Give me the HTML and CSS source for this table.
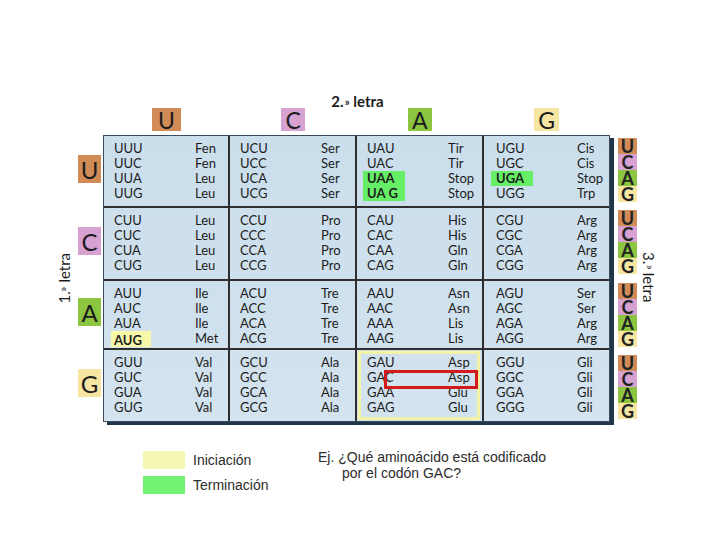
FILE: index.html
```html
<!DOCTYPE html>
<html lang="es">
<head>
<meta charset="utf-8">
<title>Código genético</title>
<link rel="stylesheet" href="styles.css">
</head>
<body>
<div class="page">
  <div class="chart">
    <div class="title">2.<span class="ord">»</span> letra</div>
    <div class="colheads">
      <span class="lt c-u">U</span>
      <span class="lt c-c">C</span>
      <span class="lt c-a">A</span>
      <span class="lt c-g">G</span>
    </div>

    <div class="lab1"><span>1.<span class="ord">»</span> letra</span></div>

    <div class="rh c-u r1">U</div>
    <div class="rh c-c r2">C</div>
    <div class="rh c-a r3">A</div>
    <div class="rh c-g r4">G</div>

    <div class="table">
      <div class="cell">
        <div class="ln"><span>UUU</span><span>Fen</span></div>
        <div class="ln"><span>UUC</span><span>Fen</span></div>
        <div class="ln"><span>UUA</span><span>Leu</span></div>
        <div class="ln"><span>UUG</span><span>Leu</span></div>
      </div>
      <div class="cell">
        <div class="ln"><span>UCU</span><span>Ser</span></div>
        <div class="ln"><span>UCC</span><span>Ser</span></div>
        <div class="ln"><span>UCA</span><span>Ser</span></div>
        <div class="ln"><span>UCG</span><span>Ser</span></div>
      </div>
      <div class="cell">
        <div class="ln"><span>UAU</span><span>Tir</span></div>
        <div class="ln"><span>UAC</span><span>Tir</span></div>
        <div class="ln"><span class="stop">UAA</span><span>Stop</span></div>
        <div class="ln"><span class="stop"><span class="gap">UA</span>G</span><span>Stop</span></div>
      </div>
      <div class="cell last-col">
        <div class="ln"><span>UGU</span><span>Cis</span></div>
        <div class="ln"><span>UGC</span><span>Cis</span></div>
        <div class="ln"><span class="stop">UGA</span><span>Stop</span></div>
        <div class="ln"><span>UGG</span><span>Trp</span></div>
      </div>

      <div class="cell">
        <div class="ln"><span>CUU</span><span>Leu</span></div>
        <div class="ln"><span>CUC</span><span>Leu</span></div>
        <div class="ln"><span>CUA</span><span>Leu</span></div>
        <div class="ln"><span>CUG</span><span>Leu</span></div>
      </div>
      <div class="cell">
        <div class="ln"><span>CCU</span><span>Pro</span></div>
        <div class="ln"><span>CCC</span><span>Pro</span></div>
        <div class="ln"><span>CCA</span><span>Pro</span></div>
        <div class="ln"><span>CCG</span><span>Pro</span></div>
      </div>
      <div class="cell">
        <div class="ln"><span>CAU</span><span>His</span></div>
        <div class="ln"><span>CAC</span><span>His</span></div>
        <div class="ln"><span>CAA</span><span>Gln</span></div>
        <div class="ln"><span>CAG</span><span>Gln</span></div>
      </div>
      <div class="cell last-col">
        <div class="ln"><span>CGU</span><span>Arg</span></div>
        <div class="ln"><span>CGC</span><span>Arg</span></div>
        <div class="ln"><span>CGA</span><span>Arg</span></div>
        <div class="ln"><span>CGG</span><span>Arg</span></div>
      </div>

      <div class="cell">
        <div class="ln"><span>AUU</span><span>Ile</span></div>
        <div class="ln"><span>AUC</span><span>Ile</span></div>
        <div class="ln"><span>AUA</span><span>Ile</span></div>
        <div class="ln"><span class="start">AUG</span><span>Met</span></div>
      </div>
      <div class="cell">
        <div class="ln"><span>ACU</span><span>Tre</span></div>
        <div class="ln"><span>ACC</span><span>Tre</span></div>
        <div class="ln"><span>ACA</span><span>Tre</span></div>
        <div class="ln"><span>ACG</span><span>Tre</span></div>
      </div>
      <div class="cell">
        <div class="ln"><span>AAU</span><span>Asn</span></div>
        <div class="ln"><span>AAC</span><span>Asn</span></div>
        <div class="ln"><span>AAA</span><span>Lis</span></div>
        <div class="ln"><span>AAG</span><span>Lis</span></div>
      </div>
      <div class="cell last-col">
        <div class="ln"><span>AGU</span><span>Ser</span></div>
        <div class="ln"><span>AGC</span><span>Ser</span></div>
        <div class="ln"><span>AGA</span><span>Arg</span></div>
        <div class="ln"><span>AGG</span><span>Arg</span></div>
      </div>

      <div class="cell last-row">
        <div class="ln"><span>GUU</span><span>Val</span></div>
        <div class="ln"><span>GUC</span><span>Val</span></div>
        <div class="ln"><span>GUA</span><span>Val</span></div>
        <div class="ln"><span>GUG</span><span>Val</span></div>
      </div>
      <div class="cell last-row">
        <div class="ln"><span>GCU</span><span>Ala</span></div>
        <div class="ln"><span>GCC</span><span>Ala</span></div>
        <div class="ln"><span>GCA</span><span>Ala</span></div>
        <div class="ln"><span>GCG</span><span>Ala</span></div>
      </div>
      <div class="cell last-row framed">
        <div class="ln"><span>GAU</span><span>Asp</span></div>
        <div class="ln"><span>GAC</span><span>Asp</span></div>
        <div class="ln"><span>GAA</span><span>Glu</span></div>
        <div class="ln"><span>GAG</span><span>Glu</span></div>
        <div class="redbox"></div>
      </div>
      <div class="cell last-row last-col">
        <div class="ln"><span>GGU</span><span>Gli</span></div>
        <div class="ln"><span>GGC</span><span>Gli</span></div>
        <div class="ln"><span>GGA</span><span>Gli</span></div>
        <div class="ln"><span>GGG</span><span>Gli</span></div>
      </div>
    </div>

    <div class="ucag r1"><span class="c-u">U</span><span class="c-c">C</span><span class="c-a">A</span><span class="c-g">G</span></div>
    <div class="ucag r2"><span class="c-u">U</span><span class="c-c">C</span><span class="c-a">A</span><span class="c-g">G</span></div>
    <div class="ucag r3"><span class="c-u">U</span><span class="c-c">C</span><span class="c-a">A</span><span class="c-g">G</span></div>
    <div class="ucag r4"><span class="c-u">U</span><span class="c-c">C</span><span class="c-a">A</span><span class="c-g">G</span></div>

    <div class="lab3"><span>3.<span class="ord">»</span> letra</span></div>
  </div>

  <div class="bottom">
    <div class="legend">
      <div class="item"><span class="sw sw-start"></span><span>Iniciación</span></div>
      <div class="item"><span class="sw sw-stop"></span><span>Terminación</span></div>
    </div>
    <div class="note">
      <div>Ej. ¿Qué aminoácido está codificado</div>
      <div class="indent">por el codón GAC?</div>
    </div>
  </div>
</div>
</body>
</html>
```

FILE: styles.css
```css
* { box-sizing: border-box; }

html, body {
  margin: 0;
  padding: 0;
  background: #ffffff;
}

body {
  width: 720px;
  height: 540px;
  overflow: hidden;
  font-family: Lato, "Open Sans", sans-serif;
  color: #1c1c1c;
}

.page {
  padding-top: 94px;
}

.chart {
  margin-left: 52px;
  display: grid;
  grid-template-columns: 22px 4px 23px 2px 507px 8px 19px 3px 18px;
  grid-template-rows: 14px 23px 4px 72px 73px 69px 73px;
}

.title {
  grid-column: 5;
  grid-row: 1;
  text-align: center;
  font-size: 15px;
  font-weight: 700;
  line-height: 14px;
  padding-left: 2px;
}

.ord {
  font-size: 11px;
  vertical-align: 1px;
  margin-left: 1px;
}

.colheads {
  grid-column: 5;
  grid-row: 2;
  display: grid;
  grid-template-columns: repeat(4, 1fr);
  justify-items: center;
}

.lt {
  display: block;
  height: 23px;
  line-height: 24px;
  padding: 0 4px;
  font-size: 23px;
  text-align: center;
}

.c-u { background: #d08b57; }
.c-c { background: #d7a1d1; }
.c-a { background: #8cc53f; }
.c-g { background: #f6e6a2; }

.colheads .c-u { padding: 0 6px; }
.colheads .c-c { padding: 0 4px; }

.lab1 {
  grid-column: 1;
  grid-row: 4 / 8;
  display: flex;
  align-items: center;
  justify-content: center;
}

.lab1 > span {
  writing-mode: vertical-rl;
  transform: rotate(180deg);
  font-size: 15px;
  line-height: 16px;
  white-space: nowrap;
}

.lab3 {
  grid-column: 9;
  grid-row: 4 / 8;
  display: flex;
  align-items: center;
  justify-content: center;
}

.lab3 > span {
  writing-mode: vertical-rl;
  font-size: 15px;
  line-height: 16px;
  white-space: nowrap;
  margin-top: -2px;
}

.rh {
  grid-column: 3;
  align-self: center;
  height: 28px;
  line-height: 29px;
  text-align: center;
  font-size: 24px;
  margin-top: -5px;
}

.r1 { grid-row: 4; }
.r2 { grid-row: 5; }
.r3 { grid-row: 6; }
.r4 { grid-row: 7; }

.table {
  grid-column: 5;
  grid-row: 4 / 8;
  align-self: start;
  display: grid;
  grid-template-columns: 126px 127px 127px 125px;
  grid-template-rows: 72px 73px 69px 71px;
  background: linear-gradient(180deg, #cbdeec 0%, #d3e3ef 100%);
  border: 1px solid #3b4b5b;
  box-shadow: 4px 3px 0 #20344a;
}

.cell {
  position: relative;
  padding: 5px 0 0 10px;
  border-right: 2px solid #2e2e2e;
  border-bottom: 2px solid #2e2e2e;
  font-size: 13px;
}

.cell.last-col { border-right: none; padding-left: 12px; }
.cell.last-row { border-bottom: none; }

.ln {
  display: grid;
  grid-template-columns: 81px auto;
  height: 15px;
  line-height: 15px;
  white-space: nowrap;
}

.stop {
  display: inline-block;
  width: 42px;
  margin-left: -4px;
  padding-left: 4px;
  background: #66ee66;
  font-weight: 700;
}

.gap { margin-right: 3px; }

.cell.last-col .stop { margin-left: -5px; padding-left: 5px; }

.start {
  display: inline-block;
  width: 40px;
  margin-left: -3px;
  padding-left: 3px;
  height: 16px;
  line-height: 18px;
  background: #f8f8aa;
  font-weight: 700;
}

.framed::before {
  content: "";
  position: absolute;
  left: 1px;
  top: 1px;
  right: 2px;
  bottom: 1px;
  border: 3px solid #f3f3a6;
  pointer-events: none;
}

.redbox {
  position: absolute;
  left: 27px;
  top: 20px;
  width: 94px;
  height: 19px;
  border: 3px solid #d41a1a;
}

.ucag {
  grid-column: 7;
  align-self: start;
  margin-top: 3px;
  display: flex;
  flex-direction: column;
}

.ucag span {
  display: block;
  height: 16px;
  line-height: 17px;
  font-size: 18px;
  font-weight: 700;
  text-align: center;
  color: #222;
}

.r1.ucag { margin-top: 3px; }
.r2.ucag { margin-top: 3px; }
.r3.ucag { margin-top: 3px; }
.r4.ucag { margin-top: 6px; }

.bottom {
  display: flex;
  margin: 27px 0 0 143px;
  font-family: "Liberation Sans", Arial, sans-serif;
  font-size: 14px;
  color: #2c2c2c;
}

.legend {
  width: 175px;
  margin-top: 2px;
  display: flex;
  flex-direction: column;
  gap: 7px;
}

.item {
  display: flex;
  align-items: center;
  gap: 8px;
  height: 18px;
}

.sw {
  display: block;
  width: 42px;
  height: 18px;
}

.sw-start { background: #f6f6b3; }
.sw-stop { background: #74f274; }

.note {
  line-height: 16px;
}

.indent { padding-left: 24px; }
```
